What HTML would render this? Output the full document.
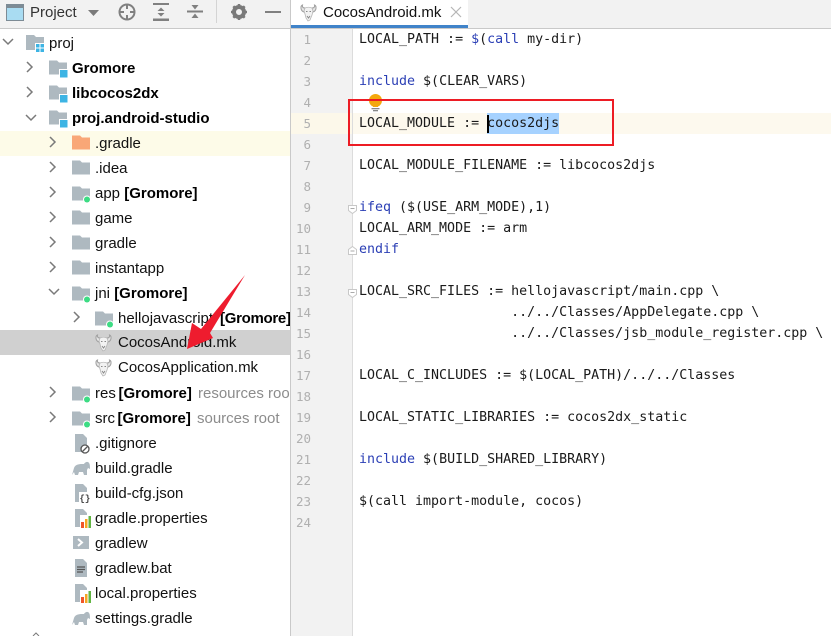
<!DOCTYPE html>
<html><head><meta charset="utf-8"><style>
html,body{margin:0;padding:0;background:#fff}
#p{position:relative;width:831px;height:636px;overflow:hidden;background:#fff;font-family:"Liberation Sans","Noto Sans CJK SC",sans-serif}
.a{position:absolute}
.r{position:absolute;white-space:nowrap;font-size:15px;line-height:25px;height:25px;color:#111}
.r b{color:#000}
.h{color:#8c8c8c}
.c{position:absolute;left:359px;white-space:pre;font:13.3px/21px "DejaVu Sans Mono",monospace;color:#1a1a1a;height:21px}
.k{color:#2b3fb5}
.n{position:absolute;width:20px;left:291px;text-align:right;white-space:pre;font:12.5px/21px "DejaVu Sans Mono",monospace;color:#b0b0b0;height:21px}
svg{position:absolute;overflow:visible}
</style></head><body><div id="p">
<svg width="0" height="0" style="left:0;top:0"><defs>
<path id="fp" d="M0 .5h8l2 2h8v12H0z" fill="#aeb9c0"/>
<g id="fo"><use href="#fp"/></g>
<g id="fb"><use href="#fp"/><rect x="10.500" y="9.500" width="8.500" height="8.500" fill="#3db4e4" stroke="#fff" stroke-width="1"/></g>
<g id="fg"><use href="#fp"/><circle cx="15" cy="13.500" r="4" fill="#fff"/><circle cx="15" cy="13.500" r="3" fill="#3ddc84"/></g>
<path id="cr" d="M0 0l5 5-5 5" fill="none" stroke="#7a7a7a" stroke-width="1.500"/>
<path id="cd" d="M0 0l5 5 5-5" fill="none" stroke="#7a7a7a" stroke-width="1.500"/>
<g id="gnu"><path d="M5 5C3 5 2 4 2.500 2 0 3 .5 8 4 9c1.500.3 2.500 0 3-1M12 5c2 0 3-1 2.500-3 2.500 1 2 6-1.500 7-1.500.3-2.500 0-3-1" fill="#e4e4e4" stroke="#a0a0a0" stroke-width="1"/><path d="M5 5c2-1 5-1 7 0l1 3-1 4-2 5-2 1-2-3-1-4-1-3z" fill="#f2f2f2" stroke="#b5b5b5" stroke-width=".8"/><path d="M6 8.500h1.500M9.500 8.500H11M7 13l1.500 2 1.500-2" stroke="#888" fill="none" stroke-width="1"/></g>
<path id="doc" d="M3 0h8l4 4v14H3z" fill="#aeb9c0"/>
<g id="ele"><path d="M0 15l2-7c1-3 4-4 8-4h2c1-2 4-3 5-1 1 1 1 4 1 6l-2-1-1 2v5h-3l-1-3H7l-1 3H3l-1-3z" fill="#aeb9c0"/></g>
<g id="pr"><use href="#doc"/><rect x="8" y="6" width="12" height="13" fill="#fff"/><rect x="9" y="13" width="3" height="6" fill="#f0562a"/><rect x="13" y="10" width="2.500" height="9" fill="#f5a623"/><rect x="16.500" y="7" width="2.500" height="12" fill="#62b543"/></g>
</defs></svg>

<!-- left header -->
<div class="a" style="left:0;top:0;width:290px;height:28px;background:#f2f2f2;border-bottom:1px solid #c9c9c9"></div>
<svg style="left:6px;top:4px" width="18" height="17"><rect x=".5" y=".5" width="17" height="16" fill="#a9dcf2" stroke="#7d8b95"/><rect x="1" y="1" width="16" height="3" fill="#7d8b95"/></svg>
<div class="a" style="left:30px;top:1px;font-size:15px;line-height:24px;color:#333">Project</div>
<svg style="left:88px;top:10px" width="11" height="6"><path d="M0 0h11L5.500 6z" fill="#7a7a7a"/></svg>
<svg style="left:118px;top:3px" width="18" height="18" fill="none" stroke="#808080" stroke-width="2"><circle cx="9" cy="9" r="7.500"/><path d="M9 1v5M9 12v5M1 9h5M12 9h5"/></svg>
<svg style="left:153px;top:3px" width="16" height="18" fill="#808080"><rect width="16" height="2"/><rect y="15.500" width="16" height="2.500"/><path d="M8 4.500l3.500 3.500h-7zM8 13.500l3.500-3.500h-7z"/></svg>
<svg style="left:187px;top:3px" width="16" height="18" fill="#808080"><rect y="7.500" width="16" height="2"/><path d="M8 6.500L4.500 2h7zM8 10.500l3.500 4.500h-7z"/></svg>
<div class="a" style="left:216px;top:0;width:1px;height:23px;background:#d4d4d4"></div>
<svg style="left:231px;top:4px" width="16" height="16"><circle cx="8" cy="8" r="5" fill="none" stroke="#7a7a7a" stroke-width="4"/><path d="M8 0v3M8 13v3M0 8h3M13 8h3M2.300 2.300l2 2M11.700 11.700l2 2M13.700 2.300l-2 2M4.300 11.700l-2 2" stroke="#7a7a7a" stroke-width="2.500"/></svg>
<div class="a" style="left:265px;top:11px;width:16px;height:2px;background:#808080"></div>

<!-- row backgrounds -->
<div class="a" style="left:0;top:131px;width:290px;height:25px;background:#fdfbe8"></div>
<div class="a" style="left:0;top:330px;width:290px;height:25px;background:#d0d0d0"></div>
<div class="a" style="left:290px;top:0;width:1px;height:636px;background:#c9c9c9"></div>

<!-- chevrons -->
<svg style="left:3px;top:39px" width="11" height="6"><use href="#cd"/></svg>
<svg style="left:27px;top:62px" width="6" height="11"><use href="#cr"/></svg>
<svg style="left:27px;top:87px" width="6" height="11"><use href="#cr"/></svg>
<svg style="left:26px;top:115px" width="11" height="6"><use href="#cd"/></svg>
<svg style="left:50px;top:137px" width="6" height="11"><use href="#cr"/></svg>
<svg style="left:50px;top:162px" width="6" height="11"><use href="#cr"/></svg>
<svg style="left:50px;top:187px" width="6" height="11"><use href="#cr"/></svg>
<svg style="left:50px;top:212px" width="6" height="11"><use href="#cr"/></svg>
<svg style="left:50px;top:237px" width="6" height="11"><use href="#cr"/></svg>
<svg style="left:50px;top:262px" width="6" height="11"><use href="#cr"/></svg>
<svg style="left:49px;top:289px" width="11" height="6"><use href="#cd"/></svg>
<svg style="left:74px;top:312px" width="6" height="11"><use href="#cr"/></svg>
<svg style="left:50px;top:387px" width="6" height="11"><use href="#cr"/></svg>
<svg style="left:50px;top:412px" width="6" height="11"><use href="#cr"/></svg>

<!-- tree icons -->
<svg style="left:26px;top:35px" width="19" height="18"><path d="M0 0h8l2 2h8v13H0z" fill="#aeb9c0"/><rect x="9" y="8" width="10" height="10" fill="#fff"/><path d="M10 9h3.500v3.500H10zM14.500 9H18v3.500h-3.500zM10 13.500h3.500V17H10zM14.500 13.500H18V17h-3.500z" fill="#3db4e4"/></svg>
<svg style="left:49px;top:60px" width="19" height="18"><use href="#fb"/></svg>
<svg style="left:49px;top:85px" width="19" height="18"><use href="#fb"/></svg>
<svg style="left:49px;top:110px" width="19" height="18"><use href="#fb"/></svg>
<svg style="left:72px;top:135px" width="19" height="18"><path d="M0 .5h8l2 2h8v12H0z" fill="#f9a777"/></svg>
<svg style="left:72px;top:160px" width="19" height="18"><use href="#fo"/></svg>
<svg style="left:72px;top:186px" width="19" height="18"><use href="#fg"/></svg>
<svg style="left:72px;top:210px" width="19" height="18"><use href="#fo"/></svg>
<svg style="left:72px;top:235px" width="19" height="18"><use href="#fo"/></svg>
<svg style="left:72px;top:260px" width="19" height="18"><use href="#fo"/></svg>
<svg style="left:72px;top:286px" width="19" height="18"><use href="#fg"/></svg>
<svg style="left:95px;top:311px" width="19" height="18"><use href="#fg"/></svg>
<svg style="left:95px;top:333px" width="18" height="18"><use href="#gnu"/></svg>
<svg style="left:95px;top:358px" width="18" height="18"><use href="#gnu"/></svg>
<svg style="left:72px;top:386px" width="19" height="18"><use href="#fg"/></svg>
<svg style="left:72px;top:411px" width="19" height="18"><use href="#fg"/></svg>
<svg style="left:72px;top:434px" width="19" height="19"><use href="#doc"/><circle cx="13" cy="15" r="4" fill="#fff" stroke="#555" stroke-width="1.300"/><path d="M10.500 17.500l5-5" stroke="#555" stroke-width="1.300"/></svg>
<svg style="left:72px;top:460px" width="19" height="18"><use href="#ele"/></svg>
<svg style="left:72px;top:484px" width="19" height="19"><use href="#doc"/><rect x="7" y="8" width="12" height="11" fill="#fff"/><text x="7.500" y="17" font-family="Liberation Mono,monospace" font-size="9" font-weight="700" fill="#444">{}</text></svg>
<svg style="left:72px;top:509px" width="19" height="19"><use href="#pr"/></svg>
<svg style="left:73px;top:536px" width="16" height="14"><rect width="16" height="13" fill="#aeb9c0"/><path d="M5 3l4 3.500-4 3.500" fill="none" stroke="#fff" stroke-width="2"/></svg>
<svg style="left:72px;top:559px" width="19" height="19"><use href="#doc"/><path d="M5 8h8M5 10.500h8M5 13h6" stroke="#555" stroke-width="1.200"/></svg>
<svg style="left:72px;top:584px" width="19" height="19"><use href="#pr"/></svg>
<svg style="left:72px;top:610px" width="19" height="18"><use href="#ele"/></svg>
<svg style="left:33px;top:633px" width="6" height="3"><path d="M0 3l3-3 3 3" fill="none" stroke="#7a7a7a"/></svg>

<!-- tree text -->
<div class="r" style="left:49px;top:31px">proj</div>
<div class="r" style="left:72px;top:56px"><b>Gromore</b></div>
<div class="r" style="left:72px;top:81px"><b>libcocos2dx</b></div>
<div class="r" style="left:72px;top:106px"><b>proj.android-studio</b></div>
<div class="r" style="left:95px;top:131px">.gradle</div>
<div class="r" style="left:95px;top:156px">.idea</div>
<div class="r" style="left:95px;top:181px">app <b>[Gromore]</b></div>
<div class="r" style="left:95px;top:206px">game</div>
<div class="r" style="left:95px;top:231px">gradle</div>
<div class="r" style="left:95px;top:256px">instantapp</div>
<div class="r" style="left:95px;top:281px">jni <b>[Gromore]</b></div>
<div class="r" style="left:118px;top:306px">hellojavascript</div>
<div class="r" style="left:220px;top:306px;width:70px;overflow:hidden;letter-spacing:-.3px"><b>[Gromore]</b></div>
<div class="r" style="left:118px;top:330px">CocosAndroid.mk</div>
<div class="r" style="left:118px;top:355px">CocosApplication.mk</div>
<div class="r" style="left:95px;top:381px">res</div>
<div class="r" style="left:118.500px;top:381px"><b>[Gromore]</b></div>
<div class="r" style="left:198px;top:381px;width:92px;overflow:hidden"><span class="h">resources root</span></div>
<div class="r" style="left:95px;top:406px">src</div>
<div class="r" style="left:117.500px;top:406px"><b>[Gromore]</b></div>
<div class="r" style="left:197px;top:406px"><span class="h">sources root</span></div>
<div class="r" style="left:95px;top:431px">.gitignore</div>
<div class="r" style="left:95px;top:456px">build.gradle</div>
<div class="r" style="left:95px;top:481px">build-cfg.json</div>
<div class="r" style="left:95px;top:506px">gradle.properties</div>
<div class="r" style="left:95px;top:531px">gradlew</div>
<div class="r" style="left:95px;top:556px">gradlew.bat</div>
<div class="r" style="left:95px;top:581px">local.properties</div>
<div class="r" style="left:95px;top:606px">settings.gradle</div>

<!-- editor chrome -->
<div class="a" style="left:291px;top:0;width:540px;height:28px;background:#f2f2f2;border-bottom:1px solid #c9c9c9"></div>
<div class="a" style="left:291px;top:0;width:177px;height:25px;background:#fff"></div>
<div class="a" style="left:291px;top:25px;width:177px;height:3px;background:#4083c9"></div>
<svg style="left:300px;top:3px" width="18" height="18"><use href="#gnu"/></svg>
<div class="a" style="left:323px;top:0;font-size:15px;line-height:25px;color:#111;white-space:nowrap">CocosAndroid.mk</div>
<svg style="left:451px;top:7px" width="10" height="10"><path d="M0 0l10 10M10 0L0 10" stroke="#b5b5b5" stroke-width="1.200"/></svg>
<div class="a" style="left:291px;top:29px;width:61px;height:607px;background:#f2f2f2"></div>
<div class="a" style="left:352px;top:29px;width:1px;height:607px;background:#dcdcdc"></div>
<div class="a" style="left:291px;top:113px;width:61px;height:21px;background:#fcf8ea"></div>
<div class="a" style="left:353px;top:113px;width:478px;height:21px;background:#fdf9ee"></div>
<div class="a" style="left:487px;top:113px;width:72px;height:21px;background:#a6d2ff"></div>
<div class="a" style="left:487px;top:115px;width:2px;height:18px;background:#000;z-index:3"></div>

<!-- line numbers -->
<div class="n" style="top:29px">1</div><div class="n" style="top:50px">2</div><div class="n" style="top:71px">3</div><div class="n" style="top:92px">4</div><div class="n" style="top:113px">5</div><div class="n" style="top:134px">6</div><div class="n" style="top:155px">7</div><div class="n" style="top:176px">8</div><div class="n" style="top:197px">9</div><div class="n" style="top:218px">10</div><div class="n" style="top:239px">11</div><div class="n" style="top:260px">12</div><div class="n" style="top:281px">13</div><div class="n" style="top:302px">14</div><div class="n" style="top:323px">15</div><div class="n" style="top:344px">16</div><div class="n" style="top:365px">17</div><div class="n" style="top:386px">18</div><div class="n" style="top:407px">19</div><div class="n" style="top:428px">20</div><div class="n" style="top:449px">21</div><div class="n" style="top:470px">22</div><div class="n" style="top:491px">23</div><div class="n" style="top:512px">24</div>

<!-- fold markers -->
<svg style="left:348px;top:205px" width="10" height="10"><path d="M.5.500h8v5l-4 3-4-3z" fill="#fff" stroke="#c8c8c8"/><path d="M2.500 3.500h4" stroke="#aaa"/></svg>
<svg style="left:348px;top:245px" width="10" height="10"><path d="M.5 9.500h8v-5l-4-3-4 3z" fill="#fff" stroke="#c8c8c8"/><path d="M2.500 6h4" stroke="#aaa"/></svg>
<svg style="left:348px;top:289px" width="10" height="10"><path d="M.5.500h8v5l-4 3-4-3z" fill="#fff" stroke="#c8c8c8"/><path d="M2.500 3.500h4" stroke="#aaa"/></svg>

<!-- code -->
<div class="c" style="top:29px">LOCAL_PATH := <span class="k">$</span>(<span class="k">call</span> my-dir)</div>
<div class="c" style="top:71px"><span class="k">include</span> $(CLEAR_VARS)</div>
<div class="c" style="top:113px;z-index:2">LOCAL_MODULE := cocos2djs</div>
<div class="c" style="top:155px">LOCAL_MODULE_FILENAME := libcocos2djs</div>
<div class="c" style="top:197px"><span class="k">ifeq</span> ($(USE_ARM_MODE),1)</div>
<div class="c" style="top:218px">LOCAL_ARM_MODE := arm</div>
<div class="c" style="top:239px"><span class="k">endif</span></div>
<div class="c" style="top:281px">LOCAL_SRC_FILES := hellojavascript/main.cpp \</div>
<div class="c" style="top:302px">                   ../../Classes/AppDelegate.cpp \</div>
<div class="c" style="top:323px">                   ../../Classes/jsb_module_register.cpp \</div>
<div class="c" style="top:365px">LOCAL_C_INCLUDES := $(LOCAL_PATH)/../../Classes</div>
<div class="c" style="top:407px">LOCAL_STATIC_LIBRARIES := cocos2dx_static</div>
<div class="c" style="top:449px"><span class="k">include</span> $(BUILD_SHARED_LIBRARY)</div>
<div class="c" style="top:491px">$(call import-module, cocos)</div>

<!-- bulb -->
<svg style="left:369px;top:94px" width="14" height="18"><circle cx="6.500" cy="6.500" r="6.500" fill="#f4a80d"/><rect x="4" y="11" width="5" height="2" fill="#f4a80d"/><rect x="2.500" y="14" width="8" height="1.300" fill="#888"/><rect x="4" y="16" width="5" height="1.300" fill="#888"/></svg>

<!-- annotations -->
<div class="a" style="left:348px;top:99px;width:262px;height:43px;border:2px solid #ed1c24;z-index:5"></div>
<svg style="left:0;top:0;z-index:6" width="831" height="636"><path d="M245 275L210 333 213 338 187 349 192 323 201 329z" fill="#ee1c2e"/></svg>
</div></body></html>
